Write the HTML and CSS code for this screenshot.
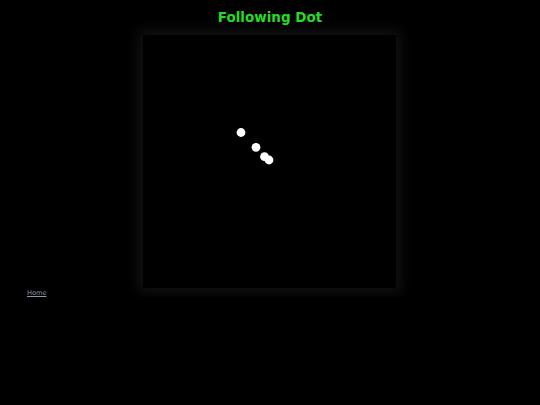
FILE: index.html
```html
<!DOCTYPE html>
<html>
<head>
<meta charset="utf-8">
<link rel="stylesheet" href="styles.css">
<title>Following Dot</title>
</head>
<body>
<h1 class="title">Following Dot</h1>
<div class="stage">
  <svg class="board" width="253" height="253" viewBox="0 0 253 253">
    <circle cx="98" cy="97.5" r="4.4" fill="#fff"/>
    <circle cx="113" cy="112.3" r="4.4" fill="#fff"/>
    <circle cx="121.5" cy="121.7" r="4.4" fill="#fff"/>
    <circle cx="126" cy="125" r="4.4" fill="#fff"/>
  </svg>
</div>
<div class="nav"><a class="home" href="#">Home</a></div>
</body>
</html>
```
FILE: styles.css
```css
html, body {
  margin: 0;
  padding: 0;
  background: #000;
}
body {
  padding-top: 7px;
  font-family: "DejaVu Sans", sans-serif;
}
.title {
  margin: 0;
  font-size: 13.5px;
  line-height: 20px;
  font-weight: bold;
  color: #22dd22;
  text-align: center;
}
.stage {
  margin-top: 8px;
  padding-left: 143px;
}
.board {
  display: block;
  background: #000;
  box-shadow: 0 0 12px 5px #111;
}
.nav {
  padding-left: 27px;
  line-height: 8px;
  margin-top: -2px;
}
.home {
  font-size: 6.6px;
  color: #8a9aab;
}
```
